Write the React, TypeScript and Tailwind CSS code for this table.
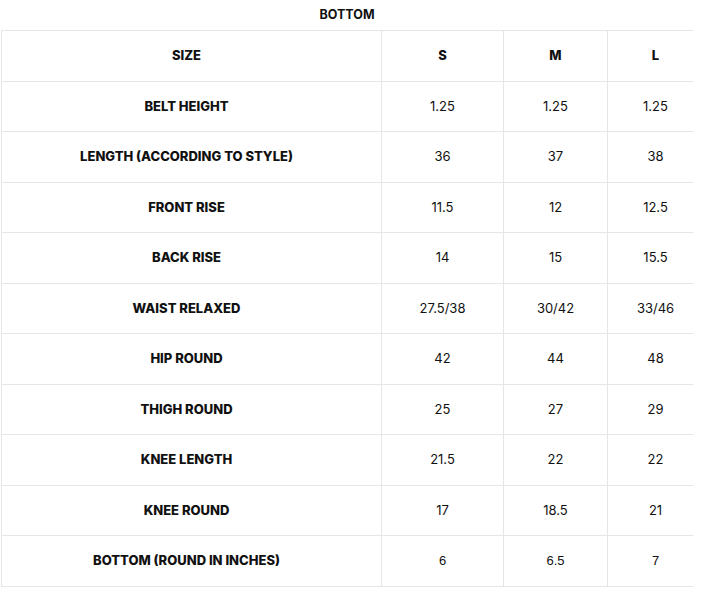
const rows: [string, string, string, string][] = [
  ["BELT HEIGHT", "1.25", "1.25", "1.25"],
  ["LENGTH (ACCORDING TO STYLE)", "36", "37", "38"],
  ["FRONT RISE", "11.5", "12", "12.5"],
  ["BACK RISE", "14", "15", "15.5"],
  ["WAIST RELAXED", "27.5/38", "30/42", "33/46"],
  ["HIP ROUND", "42", "44", "48"],
  ["THIGH ROUND", "25", "27", "29"],
  ["KNEE LENGTH", "21.5", "22", "22"],
  ["KNEE ROUND", "17", "18.5", "21"],
];

export default function App() {
  return (
    <div className="bg-white w-[701px] h-[596px] text-[#111] font-['Inter',sans-serif]">
      <div className="pl-px w-[693px]">
        <div className="h-[30px] flex items-center justify-center text-[12.5px] font-bold">BOTTOM</div>
        <div className="overflow-hidden">
          <table className="w-[702px] border-collapse table-fixed">
            <colgroup>
              <col className="w-[380px]" />
              <col className="w-[122px]" />
              <col className="w-[104px]" />
              <col className="w-[96px]" />
            </colgroup>
            <tbody>
              <tr className="h-[51px]">
                {["SIZE", "S", "M", "L"].map((h, i) => (
                  <td key={h} className={`border border-[#e6e6e6] text-center text-[13px] font-extrabold ${i === 0 ? "pr-[10px]" : ""}`}>{h}</td>
                ))}
              </tr>
              {rows.map((r, n) => (
                <tr key={r[0]} className={n % 2 === 0 ? "h-[50px]" : "h-[51px]"}>
                  <td className="border border-[#e6e6e6] text-center text-[13px] font-extrabold pr-[10px]">{r[0]}</td>
                  {r.slice(1).map((v, i) => (
                    <td key={i} className="border border-[#e6e6e6] text-center text-[13px]">{v}</td>
                  ))}
                </tr>
              ))}
              <tr className="h-[51px]">
                <td className="border border-[#e6e6e6] text-center text-[13px] font-extrabold pr-[10px]">BOTTOM (ROUND IN INCHES)</td>
                {["6", "6.5", "7"].map((v) => (
                  <td key={v} className="border border-[#e6e6e6] text-center text-[13px] font-['Liberation_Sans',sans-serif]">{v}</td>
                ))}
              </tr>
            </tbody>
          </table>
        </div>
      </div>
    </div>
  );
}
